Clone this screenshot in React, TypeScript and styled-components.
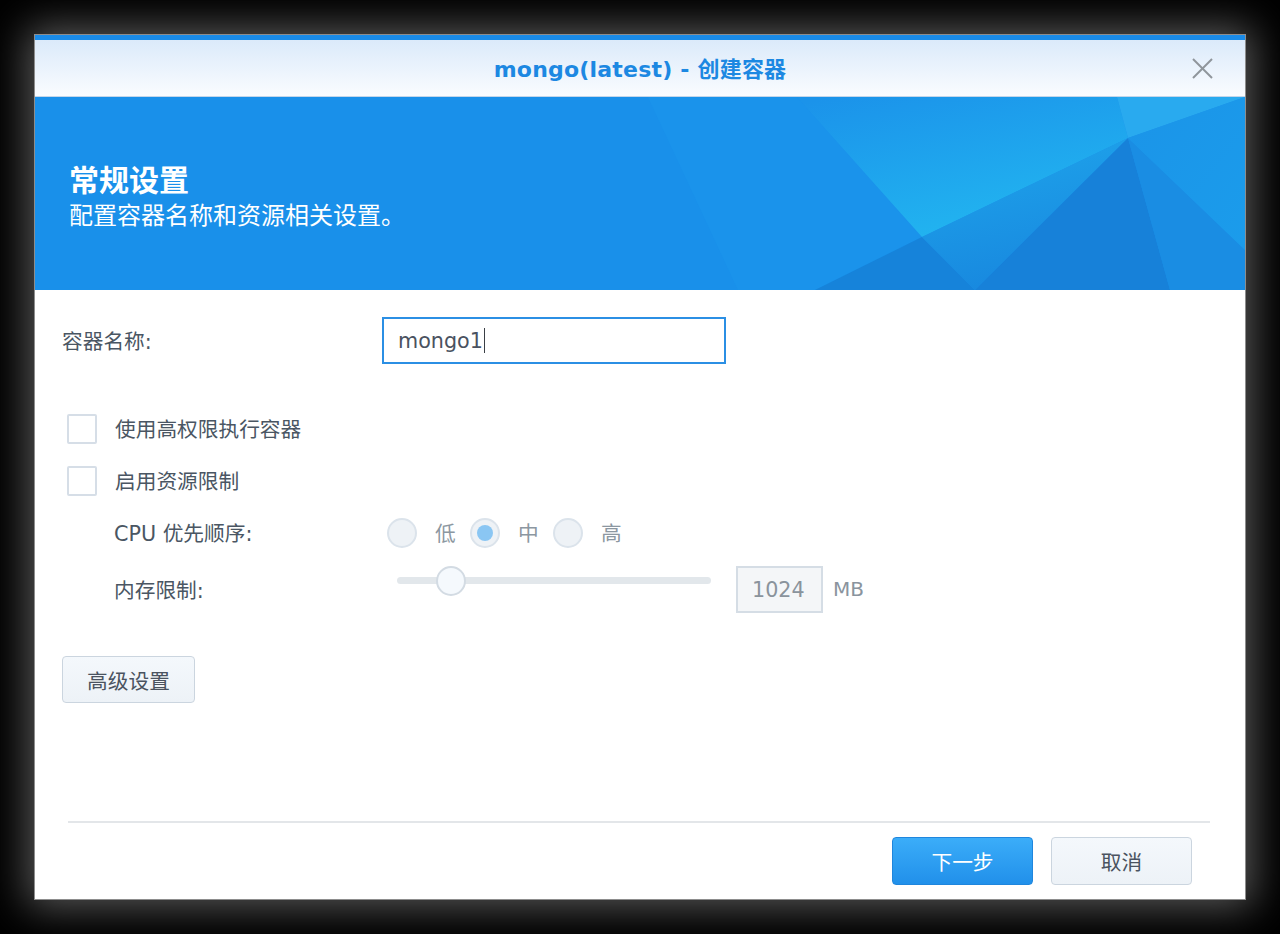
import * as React from 'react';
import styled, { createGlobalStyle } from 'styled-components';

const GlobalStyle = createGlobalStyle`
  html, body {
    margin: 0;
    padding: 0;
    background: #000;
  }
  body {
    font-family: "DejaVu Sans", "Noto Sans CJK SC", sans-serif;
  }
`;

const BannerArt = () => (
    <BannerSvg viewBox="0 0 1210 193" preserveAspectRatio="none">
        <defs>
            <linearGradient id="gLight" x1="0.1" y1="0" x2="0.6" y2="1">
                <stop offset="0" stopColor="#1b93ea"/>
                <stop offset="1" stopColor="#22b6f0"/>
            </linearGradient>
            <linearGradient id="gMid" x1="0" y1="0" x2="0.3" y2="1">
                <stop offset="0" stopColor="#1fa6ec"/>
                <stop offset="1" stopColor="#1889df"/>
            </linearGradient>
            <linearGradient id="gRight" x1="0" y1="0" x2="1" y2="1">
                <stop offset="0" stopColor="#1b94e8"/>
                <stop offset="1" stopColor="#1b9ceb"/>
            </linearGradient>
        </defs>
        <rect x="0" y="0" width="1210" height="193" fill="#1990ea"/>
        <polygon points="613,0 762,0 887,140 780,193 703,193" fill="#1a93eb"/>
        <polygon points="762,0 1082,0 1093,41 887,140" fill="url(#gLight)"/>
        <polygon points="1082,0 1210,0 1093,41" fill="#29aaef"/>
        <polygon points="887,140 780,193 940,193" fill="#1683da"/>
        <polygon points="887,140 940,193 1093,41" fill="url(#gMid)"/>
        <polygon points="1093,41 940,193 1135,193" fill="#1781d9"/>
        <polygon points="1093,41 1135,193 1210,193 1210,153" fill="#1a8de3"/>
        <polygon points="1093,41 1210,153 1210,0" fill="url(#gRight)"/>
    </BannerSvg>
);

const CloseIcon = () => (
    <svg width="21" height="21" viewBox="0 0 21 21">
        <line x1="1" y1="1" x2="20" y2="20" stroke="#8f959b" strokeWidth="2"/>
        <line x1="20" y1="1" x2="1" y2="20" stroke="#8f959b" strokeWidth="2"/>
    </svg>
);

const App = () => {
    const options = ['低', '中', '高'];
    const selected = '中';
    const memory = 1024;
    const memoryMax = 6000;
    return (
        <Page>
            <GlobalStyle/>
            <Dialog>
                <TitleBar>
                    <Title>mongo(latest) - 创建容器</Title>
                    <CloseBtn><CloseIcon/></CloseBtn>
                </TitleBar>
                <Banner>
                    <BannerArt/>
                    <BannerTitle>常规设置</BannerTitle>
                    <BannerDesc>配置容器名称和资源相关设置。</BannerDesc>
                </Banner>
                <Body>
                    <NameRow>
                        <FieldLabel width={320}>容器名称:</FieldLabel>
                        <TextField>
                            mongo1<Caret/>
                        </TextField>
                    </NameRow>
                    <CheckRow first>
                        <Checkbox/>
                        <CheckLabel>使用高权限执行容器</CheckLabel>
                    </CheckRow>
                    <CheckRow>
                        <Checkbox/>
                        <CheckLabel>启用资源限制</CheckLabel>
                    </CheckRow>
                    <SubRow>
                        <FieldLabel width={273}>CPU 优先顺序:</FieldLabel>
                        <RadioGroup>
                            {options.map((o) => (
                                <RadioOption key={o}>
                                    <Radio checked={o === selected}/>
                                    <RadioLabel>{o}</RadioLabel>
                                </RadioOption>
                            ))}
                        </RadioGroup>
                    </SubRow>
                    <MemRow>
                        <FieldLabel width={273}>内存限制:</FieldLabel>
                        <SliderTrack>
                            <SliderThumb style={{left: `${memory / memoryMax * 100}%`}}/>
                        </SliderTrack>
                        <NumberBox>{memory}</NumberBox>
                        <Unit>MB</Unit>
                    </MemRow>
                    <AdvancedButton>高级设置</AdvancedButton>
                </Body>
                <Footer>
                    <Divider/>
                    <ButtonRow>
                        <ActionButton primary>下一步</ActionButton>
                        <ActionButton>取消</ActionButton>
                    </ButtonRow>
                </Footer>
            </Dialog>
        </Page>
    );
};

const Page = styled.div`
  padding: 35px 0 35px 35px;
  min-height: 864px;
`;
const Dialog = styled.div`
  width: 1210px;
  height: 864px;
  display: flex;
  flex-direction: column;
  background: #fff;
  border-top: 5px solid #1a8be8;
  box-sizing: border-box;
  box-shadow: 0 0 0 1px #8d8d8d, 0 0 38px 8px rgba(105, 105, 105, 0.85);
`;
const TitleBar = styled.div`
  height: 56px;
  flex-shrink: 0;
  display: flex;
  align-items: center;
  justify-content: center;
  position: relative;
  background: linear-gradient(to bottom, #dbeafa, #fafcff);
  border-bottom: 1px solid #c4d6ea;
`;
const Title = styled.div`
  font-size: 22px;
  font-weight: bold;
  color: #1c88e2;
  letter-spacing: 0.2px;
  margin-top: -2px;
`;
const CloseBtn = styled.div`
  position: absolute;
  right: 32px;
  top: 18px;
  display: flex;
`;
const Banner = styled.div`
  height: 193px;
  flex-shrink: 0;
  position: relative;
  overflow: hidden;
  display: flex;
  flex-direction: column;
  justify-content: center;
  padding: 6px 0 0 34px;
  box-sizing: border-box;
  color: #fff;
`;
const BannerSvg = styled.svg`
  position: absolute;
  inset: 0;
  width: 100%;
  height: 100%;
`;
const BannerTitle = styled.div`
  position: relative;
  font-size: 30px;
  font-weight: bold;
  line-height: 36px;
`;
const BannerDesc = styled.div`
  position: relative;
  font-size: 24px;
  line-height: 30px;
  margin-top: 2px;
`;
const Body = styled.div`
  flex: 1;
  display: flex;
  flex-direction: column;
  align-items: flex-start;
  padding: 27px 0 0 27px;
  color: #4a5663;
`;
const FieldLabel = styled.div<{ width: number }>`
  width: ${p => p.width}px;
  flex-shrink: 0;
  font-size: 20.7px;
  color: #4a5663;
  margin-top: -2px;
`;
const NameRow = styled.div`
  display: flex;
  align-items: center;
  height: 47px;
`;
const TextField = styled.div`
  width: 344px;
  height: 47px;
  box-sizing: border-box;
  border: 2px solid #2b8fe4;
  display: flex;
  align-items: center;
  padding-left: 14px;
  font-size: 20.7px;
  color: #4a5260;
`;
const Caret = styled.span`
  display: inline-block;
  width: 1px;
  height: 25px;
  background: #3a3f45;
  margin-left: 1px;
`;
const CheckRow = styled.div<{ first?: boolean }>`
  display: flex;
  align-items: center;
  height: 30px;
  margin-top: ${p => p.first ? 50 : 22}px;
  padding-left: 5px;
`;
const Checkbox = styled.div`
  width: 30px;
  height: 30px;
  box-sizing: border-box;
  border: 2px solid #d6dee7;
  border-radius: 2px;
  background: #fff;
`;
const CheckLabel = styled.div`
  margin-left: 18px;
  font-size: 20.7px;
  color: #4a5663;
  margin-top: -2px;
`;
const SubRow = styled.div`
  display: flex;
  align-items: center;
  height: 30px;
  margin-top: 22px;
  padding-left: 52px;
`;
const RadioGroup = styled.div`
  display: flex;
  align-items: center;
  gap: 14px;
`;
const RadioOption = styled.div`
  display: flex;
  align-items: center;
  gap: 18px;
`;
const Radio = styled.div<{ checked?: boolean }>`
  width: 30px;
  height: 30px;
  box-sizing: border-box;
  border-radius: 50%;
  border: 2px solid #dbe3eb;
  background: #eef2f6;
  display: flex;
  align-items: center;
  justify-content: center;
  &::after {
    content: '';
    display: ${p => p.checked ? 'block' : 'none'};
    width: 16px;
    height: 16px;
    border-radius: 50%;
    background: #8ac6f3;
  }
`;
const RadioLabel = styled.div`
  font-size: 20.7px;
  color: #8c97a1;
  width: 21px;
  margin-top: -2px;
`;
const MemRow = styled.div`
  display: flex;
  align-items: center;
  height: 47px;
  margin-top: 18px;
  padding-left: 52px;
`;
const SliderTrack = styled.div`
  position: relative;
  margin-left: 10px;
  width: 314px;
  height: 7px;
  border-radius: 4px;
  background: #e2e7eb;
  margin-top: -18px;
`;
const SliderThumb = styled.div`
  position: absolute;
  top: 50%;
  width: 30px;
  height: 30px;
  box-sizing: border-box;
  border-radius: 50%;
  border: 2px solid #d3dbe3;
  background: #f5f9fd;
  transform: translate(-50%, -50%);
`;
const NumberBox = styled.div`
  margin-left: 25px;
  width: 87px;
  height: 47px;
  box-sizing: border-box;
  border: 2px solid #d5dde5;
  background: #f4f6f8;
  display: flex;
  align-items: center;
  padding-left: 14px;
  font-size: 20.7px;
  color: #8a939c;
`;
const Unit = styled.div`
  margin-left: 10px;
  font-size: 20px;
  color: #8a949e;
  margin-top: -2px;
`;
const AdvancedButton = styled.div`
  margin-top: 43px;
  width: 133px;
  height: 47px;
  box-sizing: border-box;
  border: 1px solid #cbd5df;
  border-radius: 4px;
  background: linear-gradient(to bottom, #f4f8fc, #edf2f7);
  display: flex;
  align-items: center;
  justify-content: center;
  font-size: 20.7px;
  color: #4a5360;
`;
const Footer = styled.div`
  flex-shrink: 0;
`;
const Divider = styled.div`
  margin: 0 35px 0 33px;
  height: 2px;
  background: #e3e6e9;
`;
const ButtonRow = styled.div`
  display: flex;
  justify-content: flex-end;
  gap: 18px;
  padding: 14px 53px 14px 0;
`;
const ActionButton = styled.div<{ primary?: boolean }>`
  width: 141px;
  height: 48px;
  box-sizing: border-box;
  border-radius: 4px;
  display: flex;
  align-items: center;
  justify-content: center;
  font-size: 20.7px;
  border: 1px solid ${p => p.primary ? '#1f86dd' : '#cbd5df'};
  background: ${p => p.primary
    ? 'linear-gradient(to bottom, #3badf9, #2190ea)'
    : 'linear-gradient(to bottom, #f4f8fc, #edf2f7)'};
  color: ${p => p.primary ? '#fff' : '#4a5360'};
`;

export default App;
